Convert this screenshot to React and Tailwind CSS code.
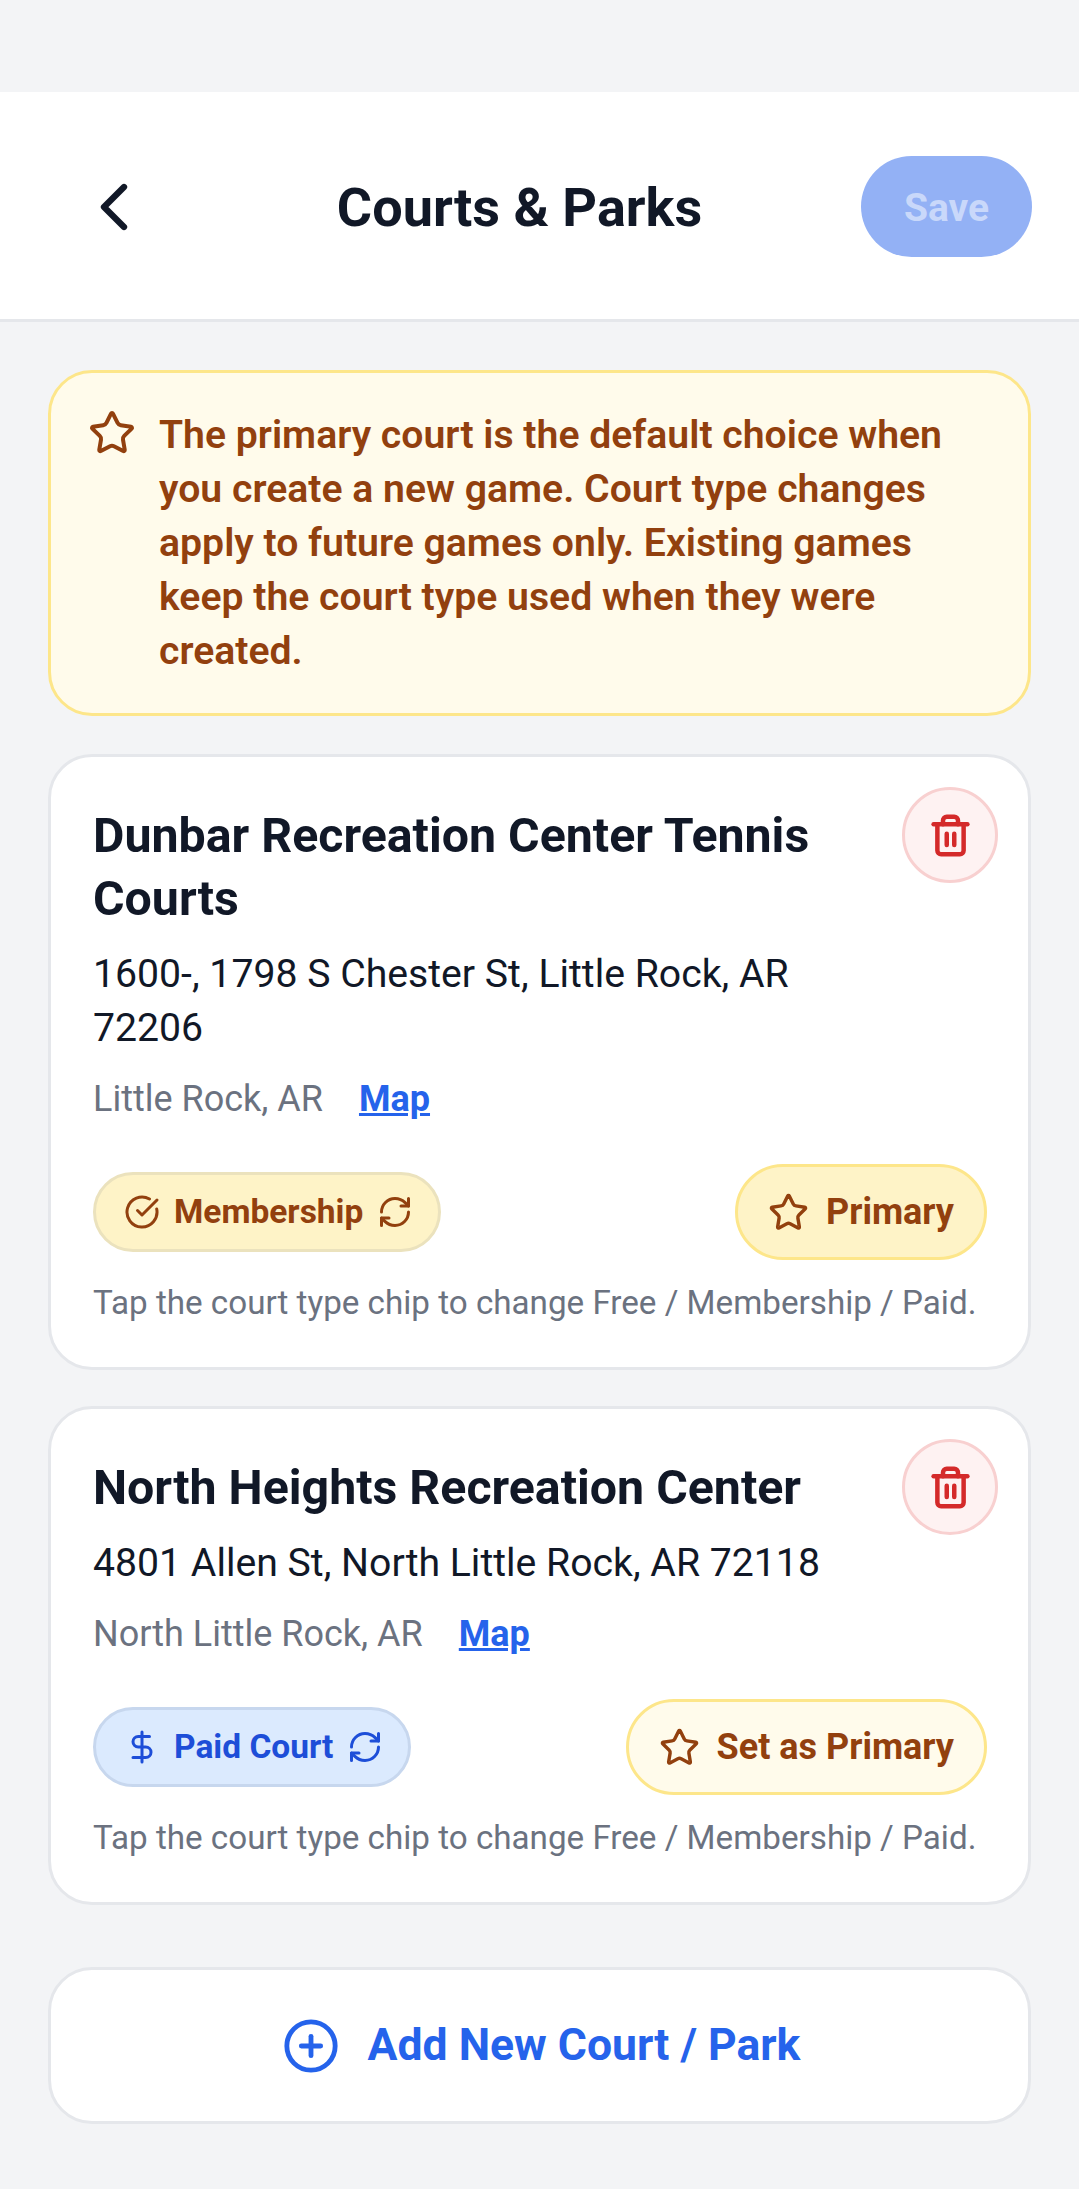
import React from 'react';
import { ChevronLeft, Star, Trash2, CircleCheckBig, RefreshCw, DollarSign, CirclePlus } from 'lucide-react';

const courts = [
    {
        name: 'Dunbar Recreation Center Tennis Courts',
        address: '1600-, 1798 S Chester St, Little Rock, AR 72206',
        city: 'Little Rock, AR',
        type: 'Membership',
        primary: true,
    },
    {
        name: 'North Heights Recreation Center',
        address: '4801 Allen St, North Little Rock, AR 72118',
        city: 'North Little Rock, AR',
        type: 'Paid Court',
        primary: false,
    },
];

const CourtCard = ({ court }) => {
    const paid = court.type === 'Paid Court';
    return (
        <div className="relative bg-white border-[3px] border-[#e5e7eb] rounded-[44px] pl-[42px] pr-[41px] pt-[47px] pb-[41px]">
            <button className="absolute top-[30px] right-[30px] w-[96px] h-[96px] rounded-full bg-[#fef2f2] border-[3px] border-[#f8d0d0] flex items-center justify-center">
                <Trash2 size={45} strokeWidth={2.4} className="text-[#d42a2a]" />
            </button>
            <h2 className="text-[48.3px] leading-[63px] font-bold text-[#111827] pr-[160px]">{court.name}</h2>
            <p className="text-[39.2px] leading-[54px] text-[#111827] mt-[17px] pr-[160px]">{court.address}</p>
            <div className="flex items-center gap-[36px] mt-[15px] h-[58px]">
                <span className="text-[36px] text-[#6b7280]">{court.city}</span>
                <span className="text-[36px] font-bold text-[#2563eb] underline">Map</span>
            </div>
            <div className="flex items-center justify-between mt-[36px] h-[96px]">
                <div className={`flex items-center h-[80px] pl-[28px] pr-[25px] rounded-full border-[3px] ${paid ? 'bg-[#dbeafe] border-[#c7d7ee] text-[#1d4ed8]' : 'bg-[#fef3c7] border-[#ebe2bd] text-[#92400e]'}`}>
                    {paid ? <DollarSign size={36} strokeWidth={2} /> : <CircleCheckBig size={36} strokeWidth={2} />}
                    <span className="text-[33.5px] font-bold ml-[14px] mr-[14px]">{court.type}</span>
                    <RefreshCw size={36} strokeWidth={2} />
                </div>
                <div className={`flex items-center h-[96px] px-[30px] rounded-full border-[3px] border-[#fde68a] text-[#92400e] ${court.primary ? 'bg-[#fef3c7]' : 'bg-[#fffbeb]'}`}>
                    <Star size={41} strokeWidth={2} />
                    <span className="text-[36px] font-bold ml-[17px]">{court.primary ? 'Primary' : 'Set as Primary'}</span>
                </div>
            </div>
            <p className="text-[33.2px] leading-[46px] text-[#6b7280] mt-[20px]">Tap the court type chip to change Free / Membership / Paid.</p>
        </div>
    );
};

const App = () => {
    return (
        <div className="min-h-[2189px] bg-[#f3f4f6] pt-[92px] font-['Roboto',sans-serif]">
            {/* Header */}
            <div className="flex items-center justify-between bg-white border-b-[3px] border-[#e5e7eb] h-[230px] pl-[74px] pr-[47px] pt-[2px]">
                <ChevronLeft size={80} strokeWidth={1.9} className="text-[#111827]" />
                <h1 className="text-[54px] font-bold text-[#111827] ml-[24px] pt-[2px]">Courts &amp; Parks</h1>
                <button className="w-[171px] h-[101px] rounded-full bg-[#93b1f5] pt-[3px] text-[39px] font-bold text-[#c9d8fa]">Save</button>
            </div>

            <div className="px-[48px] pt-[48px] flex flex-col">
                {/* Info banner */}
                <div className="flex bg-[#fffbeb] border-[3px] border-[#fde68a] rounded-[44px] pl-[37px] pr-[60px] pt-[35px] pb-[35px]">
                    <Star size={48} strokeWidth={2} className="text-[#92400e] shrink-0 mt-[1px]" />
                    <p className="ml-[23px] text-[39.2px] leading-[54px] font-semibold text-[#92400e]">
                        The primary court is the default choice when you create a new game. Court type changes apply to future games only. Existing games keep the court type used when they were created.
                    </p>
                </div>

                <div className="flex flex-col gap-[36px] mt-[38px]">
                    {courts.map((court) => <CourtCard key={court.name} court={court} />)}
                </div>

                {/* Add button */}
                <button className="flex items-center justify-center h-[157px] mt-[62px] pl-[3px] bg-white border-[3px] border-[#e5e7eb] rounded-[44px] text-[#2563eb]">
                    <CirclePlus size={58} strokeWidth={2} />
                    <span className="text-[44.5px] font-bold ml-[28px]">Add New Court / Park</span>
                </button>
            </div>
        </div>
    );
};

export default App;
